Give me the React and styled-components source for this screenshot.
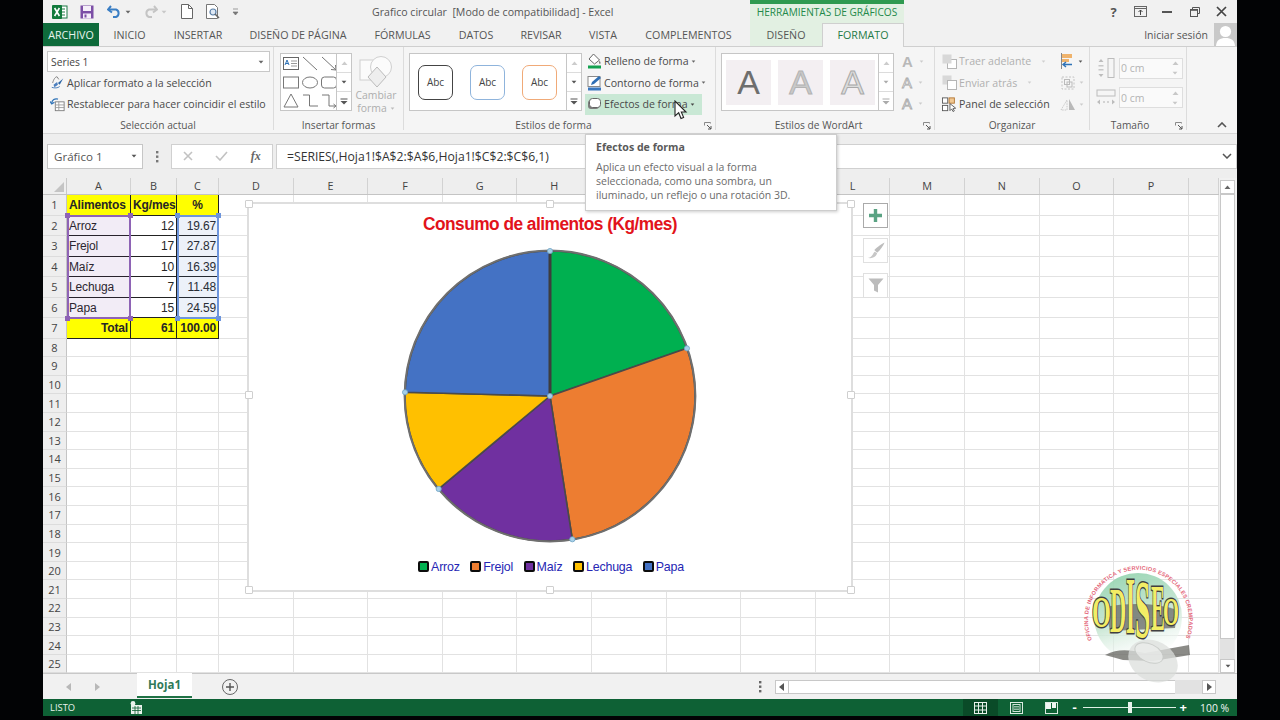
import React from "react";
import styled, { createGlobalStyle } from "styled-components";

const Global = createGlobalStyle`
  html, body { margin: 0; padding: 0; background: #000; }
  #root { width: 1280px; height: 720px; overflow: hidden; }
`;
const UI = `"Open Sans", "Noto Sans", sans-serif`;
const ARIAL = `"Liberation Sans", Arial, sans-serif`;

const Screen = styled.div`
  width: 1280px; height: 720px; background: #020305; padding: 0 43px; box-sizing: border-box;
  font-family: ${UI}; color: #4a4a4a;
`;
const Win = styled.div`
  position: relative; width: 1194px; height: 716px; background: #f1f1f1;
  display: flex; flex-direction: column; overflow: hidden;
`;
const Svg = styled.svg`display: block; flex: none;`;

/* ---------- title bar ---------- */
const TitleBar = styled.div`height: 23px; display: flex; flex: none; align-items: stretch;`;
const Qat = styled.div`width: 329px; display: flex; align-items: center; flex: none; padding-left: 9px; box-sizing: border-box;`;
const QatSlot = styled.span`margin-left: ${p => p.$ml || 0}px; display: flex;`;
const TitleText = styled.div`
  width: 378px; flex: none; font-size: 10.6px; line-height: 24px; color: #555; white-space: pre;
`;
const ContextLabel = styled.div`
  width: 154px; flex: none; box-sizing: border-box; background: #e2f0e2; border-top: 4px solid #2f9a50;
  color: #23894a; font-size: 10.1px; line-height: 17px; text-align: center; white-space: nowrap;
`;
const WinControls = styled.div`margin-left: auto; display: flex; padding-right: 2px;`;
const WinBtn = styled.span`width: 27px; display: flex; align-items: center; justify-content: center; color: #555; font-size: 13px; font-weight: 700;`;

/* ---------- tabs ---------- */
const TabRow = styled.div`height: 24px; display: flex; flex: none; border-bottom: 1px solid #cfcfcf; box-sizing: border-box; position: relative;`;
const Tab = styled.div`
  width: ${p => p.$w}px; flex: none; box-sizing: border-box; text-align: center; font-size: 10.7px; line-height: 24px;
  color: #555; white-space: nowrap;
  ${p => p.$file && `background:#0e6b3b;color:#e9f4ee;`}
  ${p => p.$ctx && `background:#e2f0e2;`}
  ${p => p.$active && `background:#f5f5f5;color:#1f7a46;border:1px solid #cfcfcf;border-bottom:none;height:24px;line-height:23px;`}
`;
const TabGap = styled.div`width: ${p => p.$w}px; flex: none;`;
const SignIn = styled.div`margin-left: auto; display: flex; align-items: center; gap: 6px; font-size: 10.5px; color: #555;`;
const Avatar = styled.div`width: 23px; height: 23px; background: #c9c9c9; overflow: hidden; display: flex; justify-content: center;`;

/* ---------- ribbon ---------- */
const Ribbon = styled.div`height: 87px; flex: none; display: flex; background: #f5f5f5; border-bottom: 1px solid #d6d6d6; box-sizing: border-box; position: relative;`;
const Group = styled.div`
  width: ${p => p.$w}px; flex: none; box-sizing: border-box; display: flex; flex-direction: column; position: relative;
  border-right: 1px solid #dcdcdc; margin-bottom: 3px;
`;
const GroupBody = styled.div`flex: 1; display: flex; min-height: 0; padding: ${p => p.$pad || "4px 0 0 4px"}; gap: ${p => p.$gap || 0}px;`;
const GroupLabel = styled.div`
  height: 15px; flex: none; text-align: center; font-size: 10.2px; line-height: 21px; color: #555; padding-right: ${p => p.$pr || 0}px; white-space: nowrap;
`;
const Launcher = styled.span`position: absolute; right: 3px; bottom: 0; display: block;`;
const Combo = styled.div`
  width: 223px; height: 21px; flex: none; box-sizing: border-box; background: #fff; border: 1px solid #c8c8c8; padding: 0 5px 0 3px; display: flex; align-items: center; justify-content: space-between;
  font-size: 10.3px; color: #444;
`;
const Stack = styled.div`
  display: flex; flex-direction: column; flex: none;
  margin-left: ${p => p.$ml || 0}px; margin-top: ${p => p.$mt || 0}px; gap: ${p => p.$gap || 0}px;
  ${p => p.$w && `width: ${p.$w}px;`}
`;
const CmdRow = styled.div`
  height: ${p => p.$h || 21.5}px; flex: none; display: flex; align-items: center; gap: ${p => p.$gap || 3}px; font-size: 10.6px; white-space: nowrap;
  padding-left: ${p => p.$pl || 0}px; width: ${p => p.$w ? p.$w + "px" : "auto"}; box-sizing: border-box;
  color: ${p => p.$off ? "#b0b0b0" : "#4a4a4a"};
  ${p => p.$hot && `background:#c9e8d5;`}
`;
const CaretGap = styled.span`margin-left: ${p => p.$ml}px; display: block;`;
const Gallery = styled.div`
  display: flex; height: 58px; box-sizing: border-box; background: #fff; border: 1px solid #c6c6c6;
  width: ${p => p.$w}px; flex: none;
`;
const GalleryCells = styled.div`flex: 1; min-width: 0; display: flex; align-items: center; padding: ${p => p.$pad || 0}; gap: ${p => p.$gap || 0}px;`;
const ScrollCol = styled.div`width: 14px; flex: none; display: flex; flex-direction: column; border-left: 1px solid #c6c6c6;`;
const ScrollCell = styled.div`
  flex: 1; display: flex; align-items: center; justify-content: center; border-top: ${p => p.$first ? 0 : "1px solid #dcdcdc"};
`;
const ShapeGrid = styled.div`display: grid; grid-template-columns: repeat(3, 19px); grid-auto-rows: 18.6px; width: 57px;`;
const ShapeCell = styled.div`display: flex; align-items: center; justify-content: center;`;
const BigCmd = styled.div`width: 46px; margin-left: 1px; display: flex; flex-direction: column; align-items: center; color: #adadad; font-size: 10.4px; line-height: 13px; padding-top: 2px; text-align: center;`;
const BigCmdLine = styled.div`display: flex; align-items: center; gap: 3px; height: 13px;`;
const AbcBtn = styled.div`
  width: 35px; height: 35px; box-sizing: border-box; border: 1.3px solid ${p => p.$c}; border-radius: 7px; background: #fff;
  display: flex; align-items: center; justify-content: center; font-size: 10px; color: #444;
`;
const ACell = styled.div`
  width: 45px; height: 45px; background: #f3eff2; flex: none; display: flex; align-items: center; justify-content: center;
  font-family: ${ARIAL}; font-size: 34px; line-height: 45px; color: ${p => p.$c};
  ${p => p.$outline && `-webkit-text-stroke: 1px ${p.$outline};`}
`;
const TextFx = styled.div`display: flex; flex: none; align-items: center; gap: 6px; height: 21px; font-family: ${ARIAL}; font-size: 15px; font-weight: ${p => p.$b ? 700 : 400}; color: ${p => p.$c}; ${p => p.$s && `-webkit-text-stroke: .8px #aaa;`}`;
const Spin = styled.div`
  width: 64px; height: 21px; box-sizing: border-box; background: #fafafa; border: 1px solid #dedede; display: flex; align-items: center; justify-content: space-between;
  padding: 0 3px 0 1px; font-size: 10.5px; color: #b4b4b4;
`;
const SizeRow = styled.div`display: flex; flex: none; align-items: center; gap: 3px; height: 29.5px;`;
const Collapse = styled.span`position: absolute; right: 10px; bottom: 5px; display: block;`;

/* ---------- formula bar ---------- */
const FormulaRow = styled.div`height: 44px; flex: none; display: flex; align-items: center; padding-left: 4px; box-sizing: border-box; background: #eeeeee;`;
const NameBox = styled.div`
  width: 96px; height: 25px; box-sizing: border-box; background: #fff; border: 1px solid #c6c6c6; display: flex; align-items: center; justify-content: space-between; padding: 0 5px 0 6px; font-size: 11.6px; color: #555;
`;
const Kebab = styled.div`width: 28px; display: flex; justify-content: center;`;
const FxBox = styled.div`
  width: 102px; height: 25px; box-sizing: border-box; background: #fff; border: 1px solid #d0d0d0; display: flex; align-items: center; justify-content: space-around;
`;
const FxLabel = styled.span`font-family: "Liberation Serif", serif; font-style: italic; font-size: 12px; color: #666; font-weight: 700;`;
const FormulaInput = styled.div`
  margin-left: 3px; width: 961px; height: 25px; box-sizing: border-box; background: #fff; border: 1px solid #d0d0d0; display: flex; align-items: center; justify-content: space-between; padding: 0 4px 0 10px; font-size: 12.2px; color: #333; white-space: nowrap;
`;

/* ---------- sheet ---------- */
const SheetArea = styled.div`flex: none; height: 495px; position: relative; display: flex; background: #fff;`;
const GridWrap = styled.div`width: 1176px; flex: none; display: flex; flex-direction: column; overflow: hidden;`;
const HeadRow = styled.div`height: 17px; flex: none; display: flex; background: #eeeeee; border-bottom: 1px solid #c4c4c4; box-sizing: border-box;`;
const Corner = styled.div`width: 24px; flex: none; display: flex; align-items: flex-end; justify-content: flex-end; padding: 0 2px 2px 0; box-sizing: border-box; border-right: 1px solid #c8c8c8;`;
const ColHead = styled.div`
  width: ${p => p.$w}px; flex: none; box-sizing: border-box; text-align: center; font-size: 10.8px; line-height: 16px; color: #444; border-right: 1px solid #d2d2d2;
`;
const Row = styled.div`height: ${p => p.$h}px; flex: none; display: flex; box-sizing: border-box;`;
const RowHead = styled.div`
  width: 24px; flex: none; box-sizing: border-box; background: #eeeeee; border-right: 1px solid #c4c4c4; border-bottom: 1px solid #dcdcdc;
  text-align: center; font-size: 11px; color: #444; display: flex; align-items: center; justify-content: center;
`;
const Cell = styled.div`
  width: ${p => p.$w}px; flex: none; box-sizing: border-box; padding: 1px 2px 0; display: flex; align-items: center; overflow: hidden; white-space: nowrap;
  font-family: ${ARIAL}; font-size: 12px; color: #262626; letter-spacing: -.15px;
  justify-content: ${p => p.$a === "r" ? "flex-end" : p.$a === "c" ? "center" : "flex-start"};
  font-weight: ${p => p.$b ? 700 : 400};
  background: ${p => p.$y ? "#ffff00" : "#fff"};
  border-right: 1px solid ${p => p.$line ? "#222" : "#e2e2e2"};
  border-bottom: 1px solid ${p => p.$line ? "#222" : "#e2e2e2"};
`;
const Range = styled.div`
  position: absolute; left: ${p => p.$l}px; top: 37px; width: ${p => p.$w}px; height: 104px; box-sizing: border-box;
  border: 2px solid ${p => p.$c}; background: ${p => p.$f}; pointer-events: none;
`;
const RangeDot = styled.i`
  position: absolute; width: 5px; height: 5px; background: ${p => p.$c};
  ${p => p.$x === "l" ? "left:-4px;" : "right:-4px;"} ${p => p.$y === "t" ? "top:-4px;" : "bottom:-4px;"}
`;
const VScroll = styled.div`width: 18px; flex: none; display: flex; flex-direction: column; background: #f1f1f1; padding: 2px 2px 0 1px; box-sizing: border-box;`;
const ScrollBtn = styled.div`height: 14px; flex: none; background: #fff; border: 1px solid #c8c8c8; box-sizing: border-box; display: flex; align-items: center; justify-content: center;`;
const VThumb = styled.div`height: 445px; flex: none; background: #fff; border: 1px solid #c8c8c8; box-sizing: border-box;`;
const VTrack = styled.div`height: 20px; flex: none; background: #e2e2e2;`;

/* ---------- chart ---------- */
const Chart = styled.div`
  position: absolute; left: 204px; top: 24px; width: 606px; height: 390px; box-sizing: border-box; background: #fff; border: 2px solid #dedede;
  display: flex; flex-direction: column; align-items: center;
`;
const ChartTitle = styled.div`
  font-family: ${ARIAL}; font-weight: 700; font-size: 18px; line-height: 22px; color: #e2131b; margin-top: 9px; letter-spacing: -.55px; transform: scaleX(.962); white-space: nowrap;
`;
const PieBox = styled.div`margin-top: 10.5px; width: 300px; height: 300px; display: flex;`;
const Legend = styled.div`display: flex; gap: 10.5px; margin-top: 14px; margin-left: 2px; font-family: ${ARIAL}; font-size: 12.4px; color: #2626b4; letter-spacing: -.2px;`;
const LegendItem = styled.div`display: flex; align-items: center; gap: 2px; white-space: nowrap;`;
const Swatch = styled.span`width: 11px; height: 11px; box-sizing: border-box; border: 2.4px solid #0c0c0c; border-radius: 2px; background: ${p => p.$c}; display: block;`;
const ChartHandle = styled.i`
  position: absolute; width: 6px; height: 6px; background: #fff; border: 1px solid #cfcfcf; border-radius: 1px;
  ${p => p.$pos}
`;
const ChartTools = styled.div`position: absolute; left: 820px; top: 25px; display: flex; flex-direction: column; gap: 10px;`;
const ToolBtn = styled.div`
  width: 25px; height: 25px; box-sizing: border-box; background: #fff; border: 1px solid ${p => p.$on ? "#aaa" : "#e0e0e0"}; display: flex; align-items: center; justify-content: center;
`;

/* ---------- overlays ---------- */
const Tooltip = styled.div`
  position: absolute; left: 542px; top: 134px; width: 252px; height: 77px; box-sizing: border-box; background: #fff; border: 1px solid #cdcdcd; box-shadow: 1px 1px 3px rgba(0,0,0,.2);
  padding: 5px 10px; color: #6b6b6b; font-size: 10.5px; line-height: 14px;
`;
const TipHead = styled.div`font-weight: 700; color: #5a5a5a; margin-bottom: 6px; line-height: 14px; font-size: 10.6px;`;
const TipLine = styled.div`white-space: nowrap;`;
const Cursor = styled.div`position: absolute; left: 631px; top: 100px;`;
const Watermark = styled.div`position: absolute; left: 1032px; top: 555px; opacity: .9; pointer-events: none;`;

/* ---------- bottom ---------- */
const SheetBar = styled.div`height: 26px; flex: none; display: flex; align-items: center; background: #f1f1f1; border-top: 1px solid #c8c8c8; box-sizing: border-box; position: relative;`;
const NavArrows = styled.div`width: 94px; flex: none; display: flex; gap: 22px; padding-left: 23px; box-sizing: border-box;`;
const SheetTab = styled.div`
  width: 55px; height: 25px; margin-top: -2px; flex: none; background: #fff; border-bottom: 2px solid #217346; box-sizing: border-box; text-align: center; font-size: 11.5px; font-weight: 700; color: #2f7a58; line-height: 24px;
`;
const AddSheet = styled.div`margin-left: 27px; flex: none;`;
const SheetKebab = styled.div`margin-left: 511px; flex: none; width: 16px; display: flex; justify-content: center;`;
const HScroll = styled.div`margin-left: 7px; width: 441px; height: 14px; flex: none; display: flex;`;
const HBtn = styled.div`width: 14px; height: 14px; flex: none; background: #fff; border: 1px solid #c8c8c8; box-sizing: border-box; display: flex; align-items: center; justify-content: center;`;
const HThumb = styled.div`flex: 1; background: #fff; border-top: 1px solid #c8c8c8; border-bottom: 1px solid #c8c8c8; box-sizing: border-box;`;
const HTrack = styled.div`width: 27px; flex: none; background: #e2e2e2;`;
const Status = styled.div`flex: 1; display: flex; align-items: center; background: #0e6135; color: #e9f2ec; font-size: 9.4px; padding-left: 7px; min-height: 0;`;
const StatusText = styled.span`width: 80px; flex: none;`;
const ViewGroup = styled.div`margin-left: auto; display: flex; align-items: stretch; height: 100%;`;
const ViewBtn = styled.div`width: 35.5px; display: flex; align-items: center; justify-content: center; background: ${p => p.$on ? "#0a4b28" : "transparent"};`;
const Zoomer = styled.div`display: flex; align-items: center; margin-left: 3px; gap: 3px; color: #fff;`;
const ZoomSign = styled.span`font-size: 13px; line-height: 13px; font-weight: 700; display: block;`;
const ZoomTrack = styled.div`position: relative; width: 93px; height: 1px; background: #dff0e5; margin: 0 1px 0 3px;`;
const ZoomKnob = styled.i`position: absolute; left: 45px; top: -5px; width: 4px; height: 11px; background: #e9f2ec;`;
const ZoomPct = styled.span`margin-left: 10px; width: 37px; flex: none; font-size: 10.4px; color: #f0f6f2; font-weight: 400;`;

/* ---------- icons ---------- */
const Caret = ({ c = "#666", s = 5 }) => <Svg width={s + 2} height={s} viewBox="0 0 7 5"><path d="M0.5 1h6L3.5 4.5z" fill={c} /></Svg>;
const ExcelLogo = () => <Svg width="16" height="16" viewBox="0 0 16 16"><rect x="7" y="2" width="8" height="12" fill="#fff" stroke="#1d7a45" /><path d="M9 5h4M9 8h4M9 11h4" stroke="#1d7a45" /><rect y="1" width="10" height="14" rx="1" fill="#127a3c" /><path d="M2.6 4l4.8 8M7.4 4l-4.8 8" stroke="#fff" strokeWidth="1.6" /></Svg>;
const SaveIcon = () => <Svg width="14" height="14" viewBox="0 0 14 14"><rect x=".5" y=".5" width="13" height="13" fill="#7c4fa6" /><rect x="3" y="1" width="8" height="5" fill="#f5eff9" /><rect x="3" y="8.5" width="8" height="5" fill="#f5eff9" /><rect x="4.5" y="9.5" width="2" height="3" fill="#7c4fa6" /></Svg>;
const UndoIcon = ({ c }) => <Svg width="15" height="13" viewBox="0 0 15 13"><path d="M4 1L1 4.5 5 7.5" fill="none" stroke={c} strokeWidth="2" /><path d="M2 4.5h7a4 4 0 010 7.5H6" fill="none" stroke={c} strokeWidth="2" /></Svg>;
const RedoIcon = () => <Svg width="15" height="13" viewBox="0 0 15 13"><path d="M11 1l3 3.5-4 3" fill="none" stroke="#c4c4c4" strokeWidth="2" /><path d="M13 4.5H6a4 4 0 000 7.5h3" fill="none" stroke="#c4c4c4" strokeWidth="2" /></Svg>;
const DocIcon = () => <Svg width="12" height="15" viewBox="0 0 12 15"><path d="M.5.5h7l4 4v10H.5z" fill="#fff" stroke="#666" /><path d="M7.5.5v4h4" fill="none" stroke="#666" /></Svg>;
const PreviewIcon = () => <Svg width="15" height="16" viewBox="0 0 15 16"><path d="M.5.5h8l3 3v11H.5z" fill="#fff" stroke="#777" /><circle cx="7" cy="8" r="3" fill="#dfe9f5" stroke="#5a7fa8" strokeWidth="1.2" /><path d="M9 10l4 4" stroke="#666" strokeWidth="1.6" /></Svg>;
const QatMore = () => <Svg width="7" height="8" viewBox="0 0 7 8"><path d="M1 1h5M1 4h5L3.5 7z" fill="#777" stroke="#777" strokeWidth=".7" /></Svg>;
const RibbonDisplay = () => <Svg width="13" height="11" viewBox="0 0 13 11"><rect x=".5" y=".5" width="12" height="10" fill="none" stroke="#666" /><path d="M.5 2.5h12" stroke="#666" /><path d="M6.5 4v5M4.5 6l2-2 2 2" stroke="#444" fill="none" /></Svg>;
const Minus = () => <Svg width="11" height="3" viewBox="0 0 11 3"><rect width="10" height="2" y="1" fill="#555" /></Svg>;
const Restore = () => <Svg width="10" height="10" viewBox="0 0 10 10"><path d="M2.5 2.5V.5h7v6h-2" fill="none" stroke="#555" /><rect x=".5" y="2.5" width="7" height="7" fill="none" stroke="#555" /><path d="M.5 3h7" stroke="#555" strokeWidth="1.6" /></Svg>;
const CloseX = () => <Svg width="11" height="11" viewBox="0 0 11 11"><path d="M1 1l9 9M10 1l-9 9" stroke="#444" strokeWidth="1.7" /></Svg>;
const Person = () => <Svg width="23" height="23" viewBox="0 0 23 23"><circle cx="11.5" cy="8.5" r="5.6" fill="#fff" /><path d="M2 23c.4-6 4-8 9.5-8s9.1 2 9.5 8z" fill="#fff" /></Svg>;
const LauncherIcon = () => <Svg width="8" height="8" viewBox="0 0 8 8"><path d="M.5 3.5v-3h6v1" fill="none" stroke="#8a8a8a" /><path d="M3 3l4 4M7 4v3H4" fill="none" stroke="#555" /></Svg>;
const ApplyIcon = () => <Svg width="15" height="15" viewBox="0 0 17 15"><path d="M3 8c1-4 3-7 5-7l2 3" fill="none" stroke="#777" /><path d="M4 10l4-3 1 3-4 3z" fill="#4c7fbf" /><path d="M9 8l6-5-4 7" fill="#2d66a6" /><path d="M2 13c3 1 7 1 9-1" fill="none" stroke="#3b74b4" /></Svg>;
const ResetIcon = () => <Svg width="15" height="15" viewBox="0 0 17 15"><rect x="6" y="4.5" width="10" height="10" fill="#fff" stroke="#7a7a7a" /><path d="M6 8h10M6 11h10M10 4.5v10" stroke="#9a9a9a" /><path d="M2 6a5 5 0 017-4.5" fill="none" stroke="#2f73b7" strokeWidth="1.5" /><path d="M0 4l2 3 3-2" fill="none" stroke="#2f73b7" strokeWidth="1.3" /></Svg>;
const ShapeIcon = ({ k }) => {
  const st = { fill: "none", stroke: "#777" };
  return <Svg width="18" height="17" viewBox="0 0 18 17">
    {k === 0 && <><rect x="1.5" y="2.5" width="15" height="12" fill="#fff" stroke="#666" /><path d="M3 10l2-5 2 5M3.8 8.500h2.400" stroke="#2f73b7" fill="none" /><path d="M9 6h6M9 8.500h6M9 11h6" stroke="#999" /></>}
    {k === 1 && <path d="M2 2l14 13" {...st} />}
    {k === 2 && <><path d="M2 2l14 13" {...st} /><path d="M11 14.500l5 .5-.5-5" {...st} /></>}
    {k === 3 && <rect x="1.5" y="3" width="15" height="11" {...st} />}
    {k === 4 && <ellipse cx="9" cy="8.500" rx="7.500" ry="5.500" {...st} />}
    {k === 5 && <rect x="1.5" y="3" width="15" height="11" rx="3" {...st} />}
    {k === 6 && <path d="M9 2l7 13H2z" {...st} />}
    {k === 7 && <path d="M2 3h6.500v11H17" {...st} />}
    {k === 8 && <><path d="M2 3h7v11h6" {...st} /><path d="M13.500 12l2.500 2-2.500 2" {...st} /></>}
  </Svg>;
};
const ScrollUp = ({ c = "#ccc" }) => <Svg width="7" height="5" viewBox="0 0 7 5"><path d="M.5 4h6L3.500.5z" fill={c} /></Svg>;
const ScrollMore = ({ c = "#555" }) => <Svg width="8" height="7" viewBox="0 0 8 7"><path d="M.5 1h7" stroke={c} /><path d="M.5 3h7L4 6.500z" fill={c} /></Svg>;
const ChangeShape = () => <Svg width="34" height="34" viewBox="0 0 34 34"><rect x="1" y="5" width="21" height="20" fill="#fbfbfb" stroke="#d0d0d0" /><circle cx="22" cy="12" r="10.500" fill="#fbfbfb" stroke="#d0d0d0" /><path d="M18 12l9 10-9 10-9-10z" fill="#eee" stroke="#bbb" /></Svg>;
const FillIcon = () => <Svg width="15" height="16" viewBox="0 0 15 16"><path d="M6.500 1l6 6-5 4-5.500-5z" fill="#fff" stroke="#666" /><path d="M12.500 7.500c1 1.500 1.400 2.500.8 3.200-.5.4-1.300 0-1.300-1z" fill="#777" /><rect x="1" y="12.500" width="13" height="3" fill="#12a14f" /></Svg>;
const OutlineIcon = () => <Svg width="15" height="16" viewBox="0 0 15 16"><rect x="1" y="1.500" width="12" height="10" fill="#fff" stroke="#8a8a8a" /><path d="M4 10l1-3 7-6 2 2-7 6z" fill="#2f6fb5" /><rect x="1" y="12.500" width="13" height="3" fill="#3a78c0" /></Svg>;
const EffectIcon = () => <Svg width="15" height="14" viewBox="0 0 15 14"><rect x="1" y="3" width="11" height="9" rx="3" fill="#7d7d7d" /><rect x="2.500" y="1.500" width="11" height="9" rx="3" fill="#fff" stroke="#666" /></Svg>;
const BringIcon = ({ back }) => <Svg width="15" height="15" viewBox="0 0 15 15">{back ? <><rect x=".5" y=".5" width="9" height="9" fill="#d8d8d8" /><rect x="5.500" y="5.500" width="9" height="9" fill="#fff" stroke="#b5b5b5" /></> : <><rect x="5.500" y="5.500" width="9" height="9" fill="#fff" stroke="#b5b5b5" /><rect x=".5" y=".5" width="9" height="9" fill="#d8d8d8" /></>}</Svg>;
const PanelIcon = () => <Svg width="15" height="15" viewBox="0 0 17 16"><rect x=".5" y=".5" width="6" height="6" fill="#fff" stroke="#555" /><rect x="8" y=".5" width="6" height="6" fill="#f1c892" stroke="#b0722e" /><rect x=".5" y="9" width="6" height="6" fill="#fff" stroke="#555" /><path d="M9 7l0 8 2-2 1.500 3 1.500-.8L12.500 12.500l3-.3z" fill="#fff" stroke="#555" /></Svg>;
const AlignIcon = () => <Svg width="14" height="16" viewBox="0 0 14 16"><path d="M1.500 0v16" stroke="#888" /><rect x="2" y="1" width="10" height="4" fill="#efb36c" /><rect x="2" y="6" width="7" height="3" fill="#efb36c" /><path d="M12 11.500H4M6 9l-3 2.500L6 14" fill="none" stroke="#2f73b7" strokeWidth="1.400" /></Svg>;
const GroupIcon = () => <Svg width="16" height="16" viewBox="0 0 16 16"><rect x="2" y="2" width="12" height="12" fill="none" stroke="#c4c4c4" strokeDasharray="2 1.500" /><rect x="4.500" y="4.500" width="5" height="5" fill="none" stroke="#bbb" /><rect x="7" y="7" width="5" height="5" fill="none" stroke="#bbb" /></Svg>;
const RotateIcon = () => <Svg width="16" height="14" viewBox="0 0 16 14"><path d="M1 13l6-10v10z" fill="none" stroke="#c8c8c8" strokeDasharray="1.500 1" /><path d="M9 2v11l6 0z" fill="#b9b9b9" /></Svg>;
const HeightIcon = () => <Svg width="20" height="22" viewBox="0 0 20 22"><path d="M5 2l-2.500 3h5zM5 20l-2.500-3h5z" fill="#bdbdbd" /><path d="M2.500 8h5v1.500h-5zM2.500 12h5v1.500h-5z" fill="#c8c8c8" /><rect x="12" y="1.500" width="6" height="19" fill="none" stroke="#bcbcbc" /></Svg>;
const WidthIcon = () => <Svg width="20" height="20" viewBox="0 0 20 20"><rect x="1" y="2" width="18" height="6" fill="none" stroke="#bcbcbc" /><path d="M1 14l3-2.500v5zM19 14l-3-2.500v5z" fill="#bdbdbd" /><path d="M7 13.200h2v1.600H7zM11 13.200h2v1.600h-2z" fill="#c8c8c8" /></Svg>;
const Spinner = () => <Stack $gap={5}><ScrollUp c="#c8c8c8" /><Caret c="#c8c8c8" s={4} /></Stack>;
const Dots = ({ c = "#777" }) => <Svg width="3" height="13" viewBox="0 0 3 13"><rect y="1" width="2.400" height="2.400" fill={c} /><rect y="5.500" width="2.400" height="2.400" fill={c} /><rect y="10" width="2.400" height="2.400" fill={c} /></Svg>;
const XBad = () => <Svg width="10" height="10" viewBox="0 0 10 10"><path d="M1 1l8 8M9 1l-8 8" stroke="#c2c2c2" strokeWidth="1.600" /></Svg>;
const Check = () => <Svg width="13" height="10" viewBox="0 0 13 10"><path d="M1 5l4 4 7-8" fill="none" stroke="#c2c2c2" strokeWidth="1.600" /></Svg>;
const Tri = ({ dir, c = "#b8b8b8" }) => <Svg width="6" height="8" viewBox="0 0 6 8"><path d={dir === "l" ? "M5 0v8L0 4z" : "M1 0v8l5-4z"} fill={c} /></Svg>;
const Plus = () => <Svg width="22" height="22" viewBox="0 0 22 22"><circle cx="11" cy="11" r="7.500" fill="none" stroke="#666" /><path d="M11 7v8M7 11h8" stroke="#555" strokeWidth="1.400" /></Svg>;
const GridIcon = ({ c = "#e9f2ec" }) => <Svg width="13" height="12" viewBox="0 0 13 12"><rect x=".5" y=".5" width="12" height="11" fill="none" stroke={c} /><path d="M4.500 0v12M8.500 0v12M0 4h13M0 8h13" stroke={c} /></Svg>;
const PageIcon = () => <Svg width="13" height="12" viewBox="0 0 13 12"><rect x=".5" y=".5" width="12" height="11" fill="none" stroke="#dcebe2" /><rect x="3" y="2.500" width="7" height="7" fill="none" stroke="#cfe3d7" /><path d="M4 4.500h5M4 6h5M4 7.500h5" stroke="#cfe3d7" strokeWidth=".7" /></Svg>;
const BreakIcon = () => <Svg width="13" height="12" viewBox="0 0 13 12"><rect x=".5" y=".5" width="12" height="11" fill="none" stroke="#dcebe2" /><rect x="1" y="1" width="5" height="6" fill="#f0f6f2" /><path d="M7 1h4v5H7z" fill="#f0f6f2" /></Svg>;
const MacroIcon = () => <Svg width="12" height="13" viewBox="0 0 12 13"><rect x="1" y="4" width="11" height="9" fill="#e9f2ec" /><circle cx="3" cy="2.500" r="2.400" fill="#e9f2ec" /><path d="M2 7h9M2 9.500h9M5 5v8M8 5v8" stroke="#0e6135" strokeWidth=".8" /></Svg>;
const CursorIcon = () => <Svg width="14" height="20" viewBox="0 0 14 20"><path d="M1 1v15l3.700-3.300L7 18.500l2.600-1.100-2.300-5.400H12z" fill="#fff" stroke="#222" strokeWidth="1.100" /></Svg>;
const TinyPlus = () => <Svg width="15" height="15" viewBox="0 0 15 15"><path d="M7.500 1v13M1 7.500h13" stroke="#5aa383" strokeWidth="3.400" /></Svg>;
const Brush = () => <Svg width="20" height="17" viewBox="0 0 17 15"><path d="M7 7c2-2 6-5 9-6.500-1 3-4 7-6.500 9z" fill="#bdbdbd" /><path d="M1 14c2 0 3-.5 4-2 1-1.500 1.500-3 2.500-3.500l2 1.500c-1 3-4 5-8.500 4z" fill="#c7c7c7" /></Svg>;
const Funnel = () => <Svg width="16" height="15" viewBox="0 0 16 15"><path d="M.5.5h15L10 7v7.500L6 12.500V7z" fill="#bcbcbc" /></Svg>;

/* ---------- data ---------- */
const COLS = [64, 46, 42, ...Array(13).fill(74.6), 30.2];
const LETTERS = ["A","B","C","D","E","F","G","H","I","J","K","L","M","N","O","P",""];
const TABLE = [
  [{ t: "Alimentos", b: 1, y: 1, line: 1 }, { t: "Kg/mes", b: 1, y: 1, line: 1 }, { t: "%", b: 1, y: 1, line: 1, a: "c" }],
  [{ t: "Arroz", line: 1 }, { t: "12", a: "r", line: 1 }, { t: "19.67", a: "r", line: 1 }],
  [{ t: "Frejol", line: 1 }, { t: "17", a: "r", line: 1 }, { t: "27.87", a: "r", line: 1 }],
  [{ t: "Maíz", line: 1 }, { t: "10", a: "r", line: 1 }, { t: "16.39", a: "r", line: 1 }],
  [{ t: "Lechuga", line: 1 }, { t: "7", a: "r", line: 1 }, { t: "11.48", a: "r", line: 1 }],
  [{ t: "Papa", line: 1 }, { t: "15", a: "r", line: 1 }, { t: "24.59", a: "r", line: 1 }],
  [{ t: "Total", b: 1, y: 1, line: 1, a: "r" }, { t: "61", b: 1, y: 1, line: 1, a: "r" }, { t: "100.00", b: 1, y: 1, line: 1, a: "r" }],
];
const ROW_H = n => (n < 7 ? 20.5 : 18.62);
const SLICES = [
  { v: 19.67, c: "#00b050", n: "Arroz" },
  { v: 27.87, c: "#ed7d31", n: "Frejol" },
  { v: 16.39, c: "#7030a0", n: "Maíz" },
  { v: 11.48, c: "#ffc000", n: "Lechuga" },
  { v: 24.59, c: "#4472c4", n: "Papa" },
];

function Pie() {
  const R = 145, cx = 150, cy = 150;
  let a = 0;
  const pts = [];
  const paths = SLICES.map(s => {
    const a0 = a; a += s.v / 100 * Math.PI * 2;
    const p0 = [cx + R * Math.sin(a0), cy - R * Math.cos(a0)];
    const p1 = [cx + R * Math.sin(a), cy - R * Math.cos(a)];
    pts.push(p0);
    return { d: `M${cx} ${cy}L${p0[0]} ${p0[1]}A${R} ${R} 0 ${a - a0 > Math.PI ? 1 : 0} 1 ${p1[0]} ${p1[1]}Z`, c: s.c };
  });
  return <Svg width="300" height="300" viewBox="0 0 300 300">
    {paths.map((p, i) => <path key={i} d={p.d} fill={p.c} stroke="#4a4a4a" strokeWidth="1.600" strokeLinejoin="round" />)}
    <path d="M150 5v145" stroke="#3d3d3d" strokeWidth="3" />
    <circle cx={cx} cy={cy} r={R + .4} fill="none" stroke="#6f6f6f" strokeWidth="2" />
    {pts.concat([[cx, cy]]).map((p, i) => <circle key={i} cx={p[0]} cy={p[1]} r="2.600" fill="#a7cfe8" stroke="#6fa3c4" strokeWidth=".8" />)}
  </Svg>;
}

function Logo() {
  const letters = [
    ["O", 17, 72, 45, 0.54], ["D", 35, 77, 64, 0.35], ["I", 51, 78, 80, 0.29],
    ["S", 60, 82, 83, 0.33], ["E", 76, 75, 65, 0.32], ["O", 88, 70, 41, 0.5],
  ];
  return <Svg width="125" height="130" viewBox="0 0 125 130">
    <defs>
      <linearGradient id="orb" x1=".2" y1="0" x2=".5" y2="1">
        <stop offset="0" stopColor="#8fd1ac" /><stop offset=".55" stopColor="#c7e6d2" /><stop offset="1" stopColor="#ffffff" stopOpacity=".4" />
      </linearGradient>
      <path id="ring" d="M17 85A50.500 50.500 0 1 1 110 85" />
    </defs>
    <circle cx="63" cy="62" r="44" fill="url(#orb)" />
    <path d="M30 52c20-4 50-5 72 3l-2 18-65 3z" fill="#5a5a55" opacity=".75" />
    <text fontFamily={ARIAL} fontSize="5.600" fontWeight="700" fill="#e2566d" textLength="196" lengthAdjust="spacing">
      <textPath href="#ring" startOffset="0" textLength="196" lengthAdjust="spacing">OFICINA DE INFORMATICA Y SERVICIOS ESPECIALES CREMPADOS</textPath>
    </text>
    {letters.map(([t, x, y, fs, sx], i) =>
      <text key={i} transform={`translate(${x} ${y}) scale(${sx} 1)`} fontFamily={`"Liberation Serif", serif`} fontWeight="700" fontSize={fs} fill="#f2ec55" stroke="#2c2c2c" strokeWidth="3" paintOrder="stroke">{t}</text>)}
    <path d="M30 100c14-7 24-5 40-2l44-8 1 10-37 6-30-1z" fill="#5f5f5a" opacity=".8" />
    <ellipse cx="78" cy="106" rx="26" ry="20" transform="rotate(28 78 106)" fill="#d9dcd9" opacity=".75" />
    <ellipse cx="74" cy="98" rx="15" ry="9" transform="rotate(25 74 98)" fill="#e9ebe9" opacity=".8" stroke="#bfc3bf" />
  </Svg>;
}

const SHAPES = [0, 1, 2, 3, 4, 5, 6, 7, 8];

export default function App() {
  return (
    <Screen>
      <Global />
      <Win>
        <TitleBar>
          <Qat>
            <ExcelLogo />
            <QatSlot $ml={12}><SaveIcon /></QatSlot>
            <QatSlot $ml={13}><UndoIcon c="#3a7ec4" /></QatSlot>
            <QatSlot $ml={3}><Caret s={4} /></QatSlot>
            <QatSlot $ml={12}><RedoIcon /></QatSlot>
            <QatSlot $ml={3}><Caret c="#c8c8c8" s={4} /></QatSlot>
            <QatSlot $ml={14}><DocIcon /></QatSlot>
            <QatSlot $ml={13}><PreviewIcon /></QatSlot>
            <QatSlot $ml={11}><QatMore /></QatSlot>
          </Qat>
          <TitleText>Grafico circular  [Modo de compatibilidad] - Excel</TitleText>
          <ContextLabel>HERRAMIENTAS DE GRÁFICOS</ContextLabel>
          <WinControls>
            <WinBtn>?</WinBtn>
            <WinBtn><RibbonDisplay /></WinBtn>
            <WinBtn><Minus /></WinBtn>
            <WinBtn><Restore /></WinBtn>
            <WinBtn><CloseX /></WinBtn>
          </WinControls>
        </TitleBar>

        <TabRow>
          <Tab $w={56} $file>ARCHIVO</Tab>
          <Tab $w={61}>INICIO</Tab>
          <Tab $w={76}>INSERTAR</Tab>
          <Tab $w={124}>DISEÑO DE PÁGINA</Tab>
          <Tab $w={85}>FÓRMULAS</Tab>
          <Tab $w={62}>DATOS</Tab>
          <Tab $w={68}>REVISAR</Tab>
          <Tab $w={56}>VISTA</Tab>
          <Tab $w={115}>COMPLEMENTOS</Tab>
          <TabGap $w={4} />
          <Tab $w={72} $ctx>DISEÑO</Tab>
          <Tab $w={82} $active>FORMATO</Tab>
          <SignIn>Iniciar sesión<Avatar><Person /></Avatar></SignIn>
        </TabRow>

        <Ribbon>
          <Group $w={231}>
            <GroupBody $pad="4px 0 0 4px">
              <Stack>
                <Combo>Series 1<Caret s={4} /></Combo>
                <CmdRow $gap={2} $pl={3}><ApplyIcon />Aplicar formato a la selección</CmdRow>
                <CmdRow $gap={2} $pl={3}><ResetIcon />Restablecer para hacer coincidir el estilo</CmdRow>
              </Stack>
            </GroupBody>
            <GroupLabel>Selección actual</GroupLabel>
          </Group>

          <Group $w={130}>
            <GroupBody $pad="6px 0 0 6px">
              <Gallery $w={72}>
                <GalleryCells>
                  <ShapeGrid>
                    {SHAPES.map(k => <ShapeCell key={k}><ShapeIcon k={k} /></ShapeCell>)}
                  </ShapeGrid>
                </GalleryCells>
                <ScrollCol>
                  <ScrollCell $first><ScrollUp /></ScrollCell>
                  <ScrollCell><Caret c="#555" s={4} /></ScrollCell>
                  <ScrollCell><ScrollMore /></ScrollCell>
                </ScrollCol>
              </Gallery>
              <BigCmd>
                <ChangeShape />
                <BigCmdLine>Cambiar</BigCmdLine>
                <BigCmdLine>forma<Caret c="#bbb" s={3} /></BigCmdLine>
              </BigCmd>
            </GroupBody>
            <GroupLabel>Insertar formas</GroupLabel>
          </Group>

          <Group $w={312}>
            <GroupBody $pad="6px 0 0 5px">
              <Gallery $w={173}>
                <GalleryCells $pad="0 0 0 8px" $gap={17}>
                  <AbcBtn $c="#444">Abc</AbcBtn>
                  <AbcBtn $c="#8fb4dc">Abc</AbcBtn>
                  <AbcBtn $c="#f0aa78">Abc</AbcBtn>
                </GalleryCells>
                <ScrollCol>
                  <ScrollCell $first><ScrollUp /></ScrollCell>
                  <ScrollCell><Caret c="#555" s={4} /></ScrollCell>
                  <ScrollCell><ScrollMore /></ScrollCell>
                </ScrollCol>
              </Gallery>
              <Stack $ml={3} $mt={-2.5}>
                <CmdRow $pl={2} $w={117} $gap={2}><FillIcon />Relleno de forma<Caret s={3} /></CmdRow>
                <CmdRow $pl={2} $w={117} $gap={2}><OutlineIcon />Contorno de forma<Caret s={3} /></CmdRow>
                <CmdRow $pl={2} $w={117} $gap={2} $hot><EffectIcon />Efectos de forma<Caret c="#444" s={3} /></CmdRow>
              </Stack>
            </GroupBody>
            <GroupLabel $pr={12}>Estilos de forma</GroupLabel>
            <Launcher><LauncherIcon /></Launcher>
          </Group>

          <Group $w={219}>
            <GroupBody $pad="6px 0 0 5px">
              <Gallery $w={173}>
                <GalleryCells $pad="0 0 0 4px" $gap={7}>
                  <ACell $c="#6e6e6e">A</ACell>
                  <ACell $c="#c9c9c9" $outline="#b3b3b3">A</ACell>
                  <ACell $c="#dcdcdc" $outline="#a9a9a9">A</ACell>
                </GalleryCells>
                <ScrollCol>
                  <ScrollCell $first><ScrollUp /></ScrollCell>
                  <ScrollCell><Caret c="#aaa" s={4} /></ScrollCell>
                  <ScrollCell><ScrollMore c="#aaa" /></ScrollCell>
                </ScrollCol>
              </Gallery>
              <Stack $ml={8} $mt={-2.5}>
                <TextFx $c="#b8b8b8" $b>A<Caret c="#ccc" s={3} /></TextFx>
                <TextFx $c="#fff" $s>A<Caret c="#ccc" s={3} /></TextFx>
                <TextFx $c="#e8e8e8" $s>A<Caret c="#ccc" s={3} /></TextFx>
              </Stack>
            </GroupBody>
            <GroupLabel $pr={13}>Estilos de WordArt</GroupLabel>
            <Launcher><LauncherIcon /></Launcher>
          </Group>

          <Group $w={155}>
            <GroupBody $pad="3.500px 0 0 7px">
              <Stack $w={118}>
                <CmdRow $off $gap={2}><BringIcon />Traer adelante<CaretGap $ml={8}><Caret c="#d0d0d0" s={3} /></CaretGap></CmdRow>
                <CmdRow $off $gap={2}><BringIcon back />Enviar atrás<CaretGap $ml={8}><Caret c="#d0d0d0" s={3} /></CaretGap></CmdRow>
                <CmdRow $gap={2}><PanelIcon />Panel de selección</CmdRow>
              </Stack>
              <Stack>
                <CmdRow $gap={4}><AlignIcon /><Caret c="#555" s={3} /></CmdRow>
                <CmdRow $gap={3}><GroupIcon /><Caret c="#ccc" s={3} /></CmdRow>
                <CmdRow $gap={3}><RotateIcon /><Caret c="#ccc" s={3} /></CmdRow>
              </Stack>
            </GroupBody>
            <GroupLabel>Organizar</GroupLabel>
          </Group>

          <Group $w={97}>
            <GroupBody $pad="6.700px 0 0 6px">
              <Stack>
                <SizeRow><HeightIcon /><Spin>0 cm<Spinner /></Spin></SizeRow>
                <SizeRow><WidthIcon /><Spin>0 cm<Spinner /></Spin></SizeRow>
              </Stack>
            </GroupBody>
            <GroupLabel $pr={16}>Tamaño</GroupLabel>
            <Launcher><LauncherIcon /></Launcher>
          </Group>

          <Collapse>
            <Svg width="10" height="6" viewBox="0 0 10 6"><path d="M1 5l4-4 4 4" fill="none" stroke="#555" strokeWidth="1.600" /></Svg>
          </Collapse>
        </Ribbon>

        <FormulaRow>
          <NameBox>Gráfico 1<Caret c="#555" s={4} /></NameBox>
          <Kebab><Dots /></Kebab>
          <FxBox><XBad /><Check /><FxLabel>fx</FxLabel></FxBox>
          <FormulaInput>=SERIES(,Hoja1!$A$2:$A$6,Hoja1!$C$2:$C$6,1)
            <Svg width="10" height="6" viewBox="0 0 10 6"><path d="M1 1l4 4 4-4" fill="none" stroke="#555" strokeWidth="1.500" /></Svg>
          </FormulaInput>
        </FormulaRow>

        <SheetArea>
          <GridWrap>
            <HeadRow>
              <Corner><Svg width="10" height="10" viewBox="0 0 10 10"><path d="M10 0v10H0z" fill="#c4c4c4" /></Svg></Corner>
              {COLS.map((w, i) => <ColHead key={i} $w={w}>{LETTERS[i]}</ColHead>)}
            </HeadRow>
            {Array.from({ length: 25 }, (_, r) => (
              <Row key={r} $h={ROW_H(r)}>
                <RowHead>{r + 1}</RowHead>
                {COLS.map((w, c) => {
                  const d = (TABLE[r] && TABLE[r][c]) || {};
                  return <Cell key={c} $w={w} $a={d.a} $b={d.b} $y={d.y} $line={d.line}>{d.t}</Cell>;
                })}
              </Row>
            ))}
          </GridWrap>
          <VScroll>
            <ScrollBtn><ScrollUp c="#666" /></ScrollBtn>
            <VThumb />
            <VTrack />
            <ScrollBtn><Caret c="#555" s={4} /></ScrollBtn>
          </VScroll>

          <Range $l={24} $w={64} $c="#8e63b5" $f="rgba(112,48,160,.09)">
            <RangeDot $c="#8e63b5" $x="l" $y="t" /><RangeDot $c="#8e63b5" $x="r" $y="t" />
            <RangeDot $c="#8e63b5" $x="l" $y="b" /><RangeDot $c="#8e63b5" $x="r" $y="b" />
          </Range>
          <Range $l={134} $w={42} $c="#6d95dc" $f="rgba(68,114,196,.10)">
            <RangeDot $c="#6d95dc" $x="l" $y="t" /><RangeDot $c="#6d95dc" $x="r" $y="t" />
            <RangeDot $c="#6d95dc" $x="l" $y="b" /><RangeDot $c="#6d95dc" $x="r" $y="b" />
          </Range>

          <Chart>
            <ChartHandle $pos="left:-4px;top:-4px;" /><ChartHandle $pos="left:50%;margin-left:-4px;top:-4px;" /><ChartHandle $pos="right:-4px;top:-4px;" />
            <ChartHandle $pos="left:-4px;top:50%;margin-top:-6px;" /><ChartHandle $pos="right:-4px;top:50%;margin-top:-6px;" />
            <ChartHandle $pos="left:-4px;bottom:-4px;" /><ChartHandle $pos="left:50%;margin-left:-4px;bottom:-4px;" /><ChartHandle $pos="right:-4px;bottom:-4px;" />
            <ChartTitle>Consumo de alimentos (Kg/mes)</ChartTitle>
            <PieBox><Pie /></PieBox>
            <Legend>
              {SLICES.map(s => <LegendItem key={s.n}><Swatch $c={s.c} />{s.n}</LegendItem>)}
            </Legend>
          </Chart>
          <ChartTools>
            <ToolBtn $on><TinyPlus /></ToolBtn>
            <ToolBtn><Brush /></ToolBtn>
            <ToolBtn><Funnel /></ToolBtn>
          </ChartTools>
        </SheetArea>

        <SheetBar>
          <NavArrows><Tri dir="l" /><Tri dir="r" /></NavArrows>
          <SheetTab>Hoja1</SheetTab>
          <AddSheet><Plus /></AddSheet>
          <SheetKebab><Dots c="#666" /></SheetKebab>
          <HScroll>
            <HBtn><Tri dir="l" c="#555" /></HBtn>
            <HThumb />
            <HTrack />
            <HBtn><Tri dir="r" c="#555" /></HBtn>
          </HScroll>
        </SheetBar>

        <Status>
          <StatusText>LISTO</StatusText>
          <MacroIcon />
          <ViewGroup>
            <ViewBtn $on><GridIcon /></ViewBtn>
            <ViewBtn><PageIcon /></ViewBtn>
            <ViewBtn><BreakIcon /></ViewBtn>
            <Zoomer>
              <ZoomSign>-</ZoomSign>
              <ZoomTrack><ZoomKnob /></ZoomTrack>
              <ZoomSign>+</ZoomSign>
              <ZoomPct>100 %</ZoomPct>
            </Zoomer>
          </ViewGroup>
        </Status>

        <Tooltip>
          <TipHead>Efectos de forma</TipHead>
          <TipLine>Aplica un efecto visual a la forma</TipLine>
          <TipLine>seleccionada, como una sombra, un</TipLine>
          <TipLine>iluminado, un reflejo o una rotación 3D.</TipLine>
        </Tooltip>
        <Cursor><CursorIcon /></Cursor>
        <Watermark><Logo /></Watermark>
      </Win>
    </Screen>
  );
}
